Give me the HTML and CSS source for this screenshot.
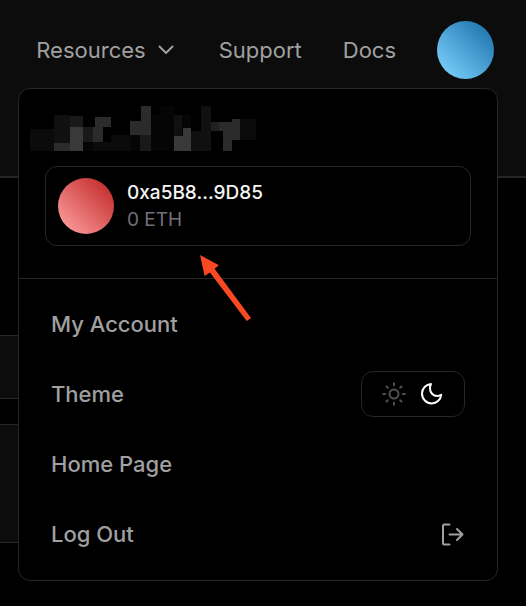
FILE: index.html
```html
<!DOCTYPE html>
<html lang="en">
<head>
<meta charset="utf-8">
<meta name="viewport" content="width=device-width, initial-scale=1">
<title>Account menu</title>
<link rel="stylesheet" href="styles.css">
</head>
<body>
<header class="header">
  <nav class="nav">
    <button class="nav-item" type="button">Resources
      <svg class="chevron" viewBox="0 0 16 10" aria-hidden="true"><path d="M1.500 1.500 8 8l6.500-6.500"/></svg>
    </button>
    <a class="nav-item" href="#support">Support</a>
    <a class="nav-item" href="#docs">Docs</a>
    <button class="avatar avatar-blue" type="button" aria-label="Account menu"></button>
  </nav>
</header>
<main class="page">
  <section class="panel panel-short"></section>
  <section class="panel panel-tall"></section>
</main>
<aside class="menu">
  <section class="account">
    <svg class="redacted" viewBox="30 33 678 135" aria-hidden="true">
      <path fill="#0b0b0b" d="M30 102h72v66H30zM219 141h54v27h-54zM273 120h57v48h-57zM660 72h48v63h-48z"/>
      <path fill="#050505" d="M189 141h30v27h-30zM330 120h30v48h-30zM393 60h27v108h-27zM420 33h42v135h-42zM486 60h27v39h-27z"/>
      <path fill="#101010" d="M102 60h48v84h-48zM462 60h24v63h-24zM513 108h30v60h-30zM543 33h30v135h-30z"/>
      <path fill="#191919" d="M150 63h39v33h-39zM189 96h30v45h-30zM360 120h33v48h-33z"/>
      <path fill="#202020" d="M573 81h24v27h-24z"/>
      <path fill="#2b2b2b" d="M102 144h48v24h-48zM225 66h48v30h-24v45h-30V96h6zM330 78h33V33h30v87h-63zM597 81h39v-9h24v63h-24v33h-27v-60h-12z"/>
      <path fill="#393939" d="M150 96h39v72h-39zM462 123h27V99h24v69h-51z"/>
    </svg>
    <div class="wallet">
      <span class="avatar avatar-red"></span>
      <div class="wallet-text">
        <div class="address">0xa5B8...9D85</div>
        <div class="balance">0 ETH</div>
      </div>
    </div>
  </section>
  <div class="menu-list">
    <a class="menu-item" href="#account">My Account</a>
    <div class="menu-item">
      <span>Theme</span>
      <div class="theme-switch">
        <button class="theme-button" type="button" aria-label="Light theme">
          <svg class="icon" viewBox="0 0 24 24" aria-hidden="true"><circle cx="12" cy="12" r="4.500"/><path d="M12 1.200v2M12 20.800v2M1.200 12h2M20.800 12h2M4.500 4.500l1.300 1.300M18.200 18.200l1.300 1.300M4.500 19.500l1.300-1.300M18.200 5.800l1.300-1.300"/></svg>
        </button>
        <button class="theme-button selected" type="button" aria-label="Dark theme">
          <svg class="icon" viewBox="0 0 24 24" aria-hidden="true"><path d="M11 2C6 2.500 2 6.500 2 11.500c0 5.500 4.300 10 9.800 10 4.800 0 8.700-3.500 9.400-8.700-1.300.9-2.600 1.200-4 1.200-4.200 0-7.200-3.400-7.200-7.600 0-1.700.3-3.200 1-4.400z"/></svg>
        </button>
      </div>
    </div>
    <a class="menu-item" href="#home">Home Page</a>
    <button class="menu-item" type="button">Log Out
      <svg class="icon" viewBox="0 0 24 24" aria-hidden="true"><path d="M8.500 2.500H3.500Q2 2.500 2 4v17q0 1.500 1.500 1.500h5M8.500 12.500h13M16 7l5.500 5.500L16 18"/></svg>
    </button>
  </div>
  <svg class="arrow" viewBox="0 0 154 199" aria-hidden="true"><path d="M0 0 57 31 44 41 154 190 141 199 30 53 14 63z"/></svg>
</aside>
</body>
</html>
```
FILE: styles.css
```css
* {
  box-sizing: border-box;
}

body {
  margin: 0;
  background: #000;
  color: #a0a0a0;
  font-family: Inter, "Liberation Sans", sans-serif;
  font-size: 22px;
  line-height: 28px;
}

button {
  padding: 0;
  border: 0;
  background: none;
  color: inherit;
  font: inherit;
  cursor: pointer;
}

a {
  color: inherit;
  text-decoration: none;
}

svg {
  display: block;
  flex: none;
  fill: none;
}

.header {
  padding: 21px 32px 97px 0;
  border-bottom: 2px solid #262626;
  background: #0c0c0c;
}

.nav {
  display: flex;
  align-items: center;
  justify-content: flex-end;
  gap: 41px;
}

.nav-item {
  display: flex;
  align-items: center;
  gap: 12px;
}

.chevron {
  width: 16px;
  height: 10px;
  margin-right: 4px;
  stroke: #a0a0a0;
  stroke-width: 2;
  stroke-linecap: round;
  stroke-linejoin: round;
}

.avatar {
  flex: none;
  border-radius: 50%;
}

.avatar-blue {
  width: 57px;
  height: 58px;
  background: linear-gradient(45deg, #76cbf7 12%, #2178b0 88%);
}

.avatar-red {
  width: 56px;
  height: 56px;
  background: linear-gradient(45deg, #fa9696 12%, #c53030 88%);
}

.page {
  display: grid;
  gap: 25px;
  padding: 157px 60px 62px 0;
}

.panel {
  border: 1px solid #262626;
  border-width: 1px 0;
  background: #0c0c0c;
}

.panel-short {
  height: 64px;
}

.panel-tall {
  height: 119px;
}

.menu {
  position: absolute;
  top: 88px;
  right: 28px;
  left: 18px;
  border: 1px solid #262626;
  border-radius: 12px;
  background: #000;
}

.account {
  padding: 17px 26px 32px;
  border-bottom: 1px solid #262626;
}

.redacted {
  width: 226px;
  height: 45px;
  margin: 0 0 15px -15px;
  shape-rendering: crispEdges;
}

.wallet {
  display: flex;
  align-items: center;
  gap: 13px;
  padding: 11px 12px;
  border: 1px solid #262626;
  border-radius: 12px;
  font-size: 19px;
  line-height: 27px;
}

.address {
  color: #f4f4f4;
  font-weight: 500;
}

.balance {
  color: #71717a;
}

.menu-list {
  padding: 10px 0 11px;
}

.menu-item {
  display: flex;
  align-items: center;
  justify-content: space-between;
  width: 100%;
  height: 70px;
  padding: 0 32px;
  font-weight: 500;
}

.theme-switch {
  display: flex;
  gap: 14px;
  padding: 10px 20px;
  border: 1px solid #262626;
  border-radius: 12px;
}

.icon {
  width: 24px;
  height: 24px;
  stroke: currentColor;
  stroke-width: 2;
  stroke-linecap: round;
  stroke-linejoin: round;
}

.theme-button {
  color: #505050;
}

.theme-button.selected {
  color: #fff;
}

.arrow {
  position: absolute;
  top: 166px;
  left: 181px;
  width: 51px;
  height: 66px;
  fill: #f94922;
}
```
